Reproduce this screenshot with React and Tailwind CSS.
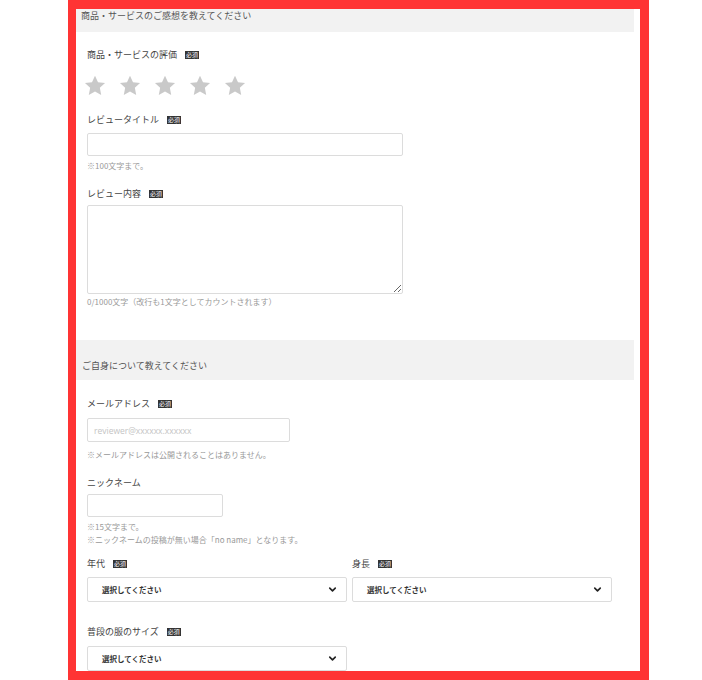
import { ChevronDown } from "lucide-react"

const jp = { fontFamily: '"Noto Sans CJK JP", "Noto Sans", sans-serif' }

// ※ kept in the CJK font with text presentation, so no colour emoji is picked
function Kome() {
    return <span className="[font-variant-emoji:text]" style={{ fontFamily: '"Noto Sans CJK JP"' }}>※</span>
}

function Badge() {
    return (
        <span className="ml-[8px] inline-flex h-[8px] w-[14px] items-center justify-center bg-[#333] text-[6px] leading-none text-white">
            必須
        </span>
    )
}

function Label({ children, required, className = "" }) {
    return (
        <div className={"flex h-[12px] items-center text-[9px] leading-[12px] text-[#444] " + className}>
            <span>{children}</span>
            {required && <Badge />}
        </div>
    )
}

function Note({ children, className = "" }) {
    return <div className={"text-[8px] leading-[13px] text-[#999] " + className}>{children}</div>
}

function Star() {
    return (
        <svg width="22" height="21" viewBox="0 0 24 23">
            <path d="M12 0.8l3.3 7.1 7.7 0.9-5.7 5.3 1.5 7.7L12 18l-6.8 3.8 1.5-7.7L1 8.8l7.7-0.9z" fill="#c9c9c9" />
        </svg>
    )
}

function Select({ className = "" }) {
    return (
        <div className={"flex h-[25px] items-center justify-between rounded-[2px] border border-[#dcdcdc] bg-white pl-[14px] pr-[8px] " + className}>
            <span className="text-[7.5px] font-bold text-[#333]">選択してください</span>
            <ChevronDown size={11} strokeWidth={3.5} color="#222" />
        </div>
    )
}

export default function App() {
    return (
        <div className="h-[680px] w-[702px] bg-white" style={jp}>
            <div className="ml-[68px] h-[680px] w-[581px] overflow-hidden border-t-[9px] border-b-[9px] border-l-[8px] border-r-[9px] border-[#ff3434] bg-white">
                <div className="mr-[6px] h-[23px] bg-[#f2f2f2] pl-[5px] text-[9px] leading-[13px] text-[#555]">
                    商品・サービスのご感想を教えてください
                </div>

                <div className="pl-[11px]">
                    <Label required className="mt-[17px]">商品・サービスの評価</Label>
                    <div className="ml-[-3px] mt-[14px] flex gap-[13px]">
                        <Star />
                        <Star />
                        <Star />
                        <Star />
                        <Star />
                    </div>

                    <Label required className="mt-[18px]">レビュータイトル</Label>
                    <input className="mt-[7px] block h-[23px] w-[316px] rounded-[2px] border border-[#dcdcdc] bg-white" />
                    <Note className="mt-[3px]"><Kome />100文字まで。</Note>

                    <Label required className="mt-[16px]">レビュー内容</Label>
                    <textarea className="mt-[5px] block h-[89px] w-[316px] rounded-[2px] border border-[#dcdcdc] bg-white" />
                    <Note className="mt-[1px]">0/1000文字（改行も1文字としてカウントされます）</Note>
                </div>

                <div className="mr-[6px] mt-[32px] h-[40px] bg-[#f2f2f2] pl-[6px] pt-[19px] text-[9px] leading-[13px] text-[#555]">
                    ご自身について教えてください
                </div>

                <div className="pl-[11px]">
                    <Label required className="mt-[18px]">メールアドレス</Label>
                    <input
                        placeholder="reviewer@xxxxxx.xxxxxx"
                        className="mt-[8px] block h-[24px] w-[203px] rounded-[2px] border border-[#dcdcdc] bg-white pl-[6px] text-[8.5px] placeholder:text-[#c4c4c4]"
                        style={{ fontFamily: '"Open Sans", sans-serif' }}
                    />
                    <Note className="mt-[6px]"><Kome />メールアドレスは公開されることはありません。</Note>

                    <Label className="mt-[16px]">ニックネーム</Label>
                    <input className="mt-[5px] block h-[23px] w-[136px] rounded-[2px] border border-[#dcdcdc] bg-white" />
                    <Note className="mt-[3px]">
                        <Kome />15文字まで。
                        <br />
                        <Kome />ニックネームの投稿が無い場合「no name」となります。
                    </Note>

                    <div className="mt-[12px] flex gap-[5px]">
                        <div className="w-[260px]">
                            <Label required>年代</Label>
                            <Select className="mt-[7px]" />
                        </div>
                        <div className="w-[260px]">
                            <Label required>身長</Label>
                            <Select className="mt-[7px]" />
                        </div>
                    </div>

                    <Label required className="mt-[24px]">普段の服のサイズ</Label>
                    <Select className="mt-[8px] w-[260px]" />
                </div>
            </div>
        </div>
    )
}
